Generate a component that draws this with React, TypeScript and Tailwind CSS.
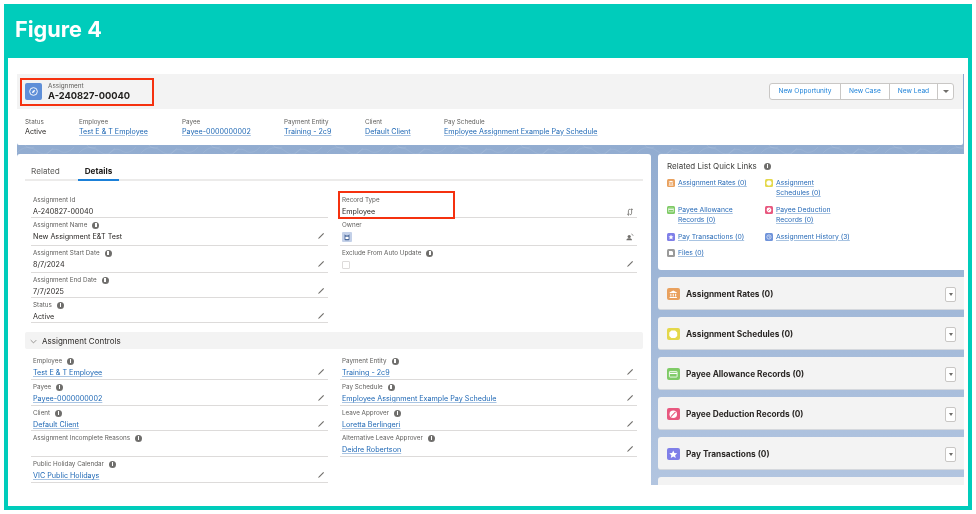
import React from 'react'

const Pencil = () => (
  <svg viewBox="0 0 10 10" className="w-[8px] h-[8px] mb-[2px] shrink-0 text-[#706e6b]" fill="currentColor">
    <path d="M7.8 1.2 8.8 2.2 3.2 7.8 1.2 8.8l1-2z" />
  </svg>
)

const Info = () => (
  <span className="w-[7px] h-[7px] rounded-full bg-[#6f6e6c] inline-flex items-center justify-center shrink-0">
    <span className="w-[1.5px] h-[4px] bg-white" />
  </span>
)

const SwapIcon = () => (
  <svg viewBox="0 0 10 10" className="w-[8px] h-[8px] shrink-0 text-[#706e6b]" fill="none" stroke="currentColor" strokeWidth="1">
    <path d="M3 9V3.5A2 2 0 0 1 5 1.5M1.5 7.5 3 9l1.5-1.5M7 1v5.5A2 2 0 0 1 5 8.5M5.5 2.5 7 1l1.5 1.5" />
  </svg>
)

const OwnerIcon = () => (
  <svg viewBox="0 0 10 10" className="w-[8px] h-[8px] shrink-0 text-[#706e6b]" fill="currentColor">
    <circle cx="4" cy="4.4" r="2" />
    <path d="M.5 9c0-1.6 1.6-2.4 3.5-2.4S7.5 7.4 7.5 9z" />
    <path d="M6.6 1.2A3 3 0 0 1 9 3.6" fill="none" stroke="currentColor" strokeWidth=".8" />
  </svg>
)

const Avatar = () => (
  <span className="w-[10px] h-[10px] rounded-[1px] bg-[#c3d0e8] flex items-center justify-center">
    <svg viewBox="0 0 10 10" className="w-[8px] h-[8px]">
      <path d="M2 1.5 3.5 3h3L8 1.5V8a1 1 0 0 1-1 1H3a1 1 0 0 1-1-1z" fill="#3f5f94" />
      <rect x="3" y="4.6" width="4" height="3" fill="#fff" />
    </svg>
  </span>
)

function Field({ label, info, value, link, edit, height, icon, children }: any) {
  return (
    <div className={`${height} border-b border-[#dddbda] px-[2px] pt-[3px] overflow-hidden`}>
      <div className="flex items-center gap-[5px] h-[8px] text-[6.3px] leading-[8px] text-[#5f5e5c]">
        <span>{label}</span>
        {info && <Info />}
      </div>
      <div className="flex items-center justify-between h-[12px] mt-[2px] pr-[1px] text-[7.2px] leading-[12px] text-[#2b2826]">
        {children}
        {value && (link ? <span className="text-[#1f68b5] underline decoration-[#a9c4e2]">{value}</span> : <span>{value}</span>)}
        {edit && <Pencil />}
        {icon}
      </div>
    </div>
  )
}

const TopField = ({ label, value, link, width }: any) => (
  <div className={width}>
    <div className="text-[6.3px] leading-[8px] text-[#5f5e5c]">{label}</div>
    <div className={`text-[7.15px] leading-[12px] ${link ? 'text-[#1f68b5] underline decoration-[#a9c4e2]' : 'text-[#2b2826]'}`}>{value}</div>
  </div>
)

const RatesGlyph = () => (
  <svg viewBox="0 0 12 12" className="w-full h-full" fill="#fff">
    <path d="M6 2.5 9.5 4.3v.6h-7v-.6zM3.2 5.5h1v2.6h-1zM5.5 5.5h1v2.6h-1zM7.8 5.5h1v2.6h-1zM2.5 8.6h7v1h-7z" />
  </svg>
)
const ScheduleGlyph = () => (
  <svg viewBox="0 0 12 12" className="w-full h-full" fill="#fff">
    <path d="M4.2 2.4h3.6L9.8 4.4v3.2L7.8 9.6H4.2L2.2 7.6V4.4z" />
  </svg>
)
const AllowanceGlyph = () => (
  <svg viewBox="0 0 12 12" className="w-full h-full">
    <rect x="2.3" y="3.3" width="7.4" height="5.4" rx=".6" fill="none" stroke="#fff" strokeWidth=".8" />
    <rect x="2.3" y="4.6" width="7.4" height="1.2" fill="#fff" />
  </svg>
)
const DeductionGlyph = () => (
  <svg viewBox="0 0 12 12" className="w-full h-full">
    <circle cx="6" cy="6" r="3.6" fill="#fff" />
    <path d="M3.8 8.2 8.2 3.8" stroke="#e8587f" strokeWidth="1" />
  </svg>
)
const StarGlyph = () => (
  <svg viewBox="0 0 12 12" className="w-full h-full" fill="#fff">
    <path d="m6 2.3 1.1 2.5 2.7.3-2 1.8.6 2.7L6 8.2 3.6 9.6l.6-2.7-2-1.8 2.7-.3z" />
  </svg>
)
const HistoryGlyph = () => (
  <svg viewBox="0 0 12 12" className="w-full h-full" fill="none" stroke="#fff" strokeWidth=".9">
    <circle cx="6" cy="6" r="3.2" />
    <path d="M6 4.2V6l1.2.8" />
  </svg>
)
const FilesGlyph = () => (
  <svg viewBox="0 0 12 12" className="w-full h-full" fill="#fff">
    <path d="M3 3h4.4L9 4.6V9H3z" />
  </svg>
)

const QuickLink = ({ color, glyph, children }: any) => (
  <div className="flex gap-[3px]">
    <span className={`w-[8px] h-[8px] rounded-[1.5px] mt-[1px] shrink-0 ${color}`}>{glyph}</span>
    <span className="whitespace-nowrap text-[6.8px] leading-[10.4px] text-[#2a6cb8] underline decoration-[#a9c4e2]">{children}</span>
  </div>
)

const RelatedCard = ({ color, glyph, title }: any) => (
  <div className="h-[33px] shrink-0 bg-[#f3f3f3] rounded-l-[3px] border-b border-[#d5d8dd] flex items-center pl-[9px] pr-[8px] pt-[2px]">
    <span className={`w-[12.5px] h-[12.5px] rounded-[2px] shrink-0 ${color}`}>{glyph}</span>
    <span className="ml-[6.5px] flex-1 text-[8.3px] font-bold text-[#2b2826]">{title}</span>
    <span className="w-[11px] h-[15px] bg-white border border-[#c9c7c5] rounded-[2px] flex items-center justify-center">
      <span className="w-0 h-0 border-l-[2.5px] border-r-[2.5px] border-t-[3px] border-l-transparent border-r-transparent border-t-[#706e6b]" />
    </span>
  </div>
)

export default function App() {
  return (
    <div className="w-[976px] h-[514px] bg-white p-[4px] font-['Inter',sans-serif] overflow-hidden blur-[0.35px]">
      <div className="h-[506px] bg-[#00ccbb] flex flex-col px-[4px] pb-[4px]">
        <div className="h-[54px] shrink-0 flex items-center pl-[7px] pb-[3px] text-white text-[21.7px] font-bold">Figure 4</div>

        <div className="flex-1 bg-white pl-[9px] pr-[4px] pt-[16px] min-h-0">
          <div className="relative h-[411px] overflow-hidden bg-gradient-to-b from-[#8ba7cd] to-[#b2c5e0]">
            {/* faint swirl on the banner */}
            <svg className="absolute left-0 top-[71px] w-full h-[9px]" fill="none">
              <defs>
                <pattern id="swirl" width="62" height="9" patternUnits="userSpaceOnUse">
                  <path d="M0 8C6 1 14 1 20 6s12 3 16-3M30 9c3-5 9-6 13-3s10 1 14-4M8 0c2 3 6 4 9 2" stroke="#ffffff" strokeOpacity=".12" strokeWidth=".6" />
                </pattern>
              </defs>
              <rect width="100%" height="9" fill="url(#swirl)" />
            </svg>

            {/* Record header */}
            <div className="relative h-[71px] bg-white mr-[1px] rounded-b-[2px]">
              <div className="h-[35px] bg-[#f3f3f3] flex items-center justify-between pl-[8px] pr-[9px]">
                <div className="flex items-center gap-[6px]">
                  <span className="w-[17px] h-[17px] rounded-[2px] bg-[#5f8fd8] flex items-center justify-center">
                    <svg viewBox="0 0 12 12" className="w-[11px] h-[11px]" fill="none" stroke="#fff" strokeWidth="1">
                      <circle cx="6" cy="6" r="4.2" />
                      <path d="M7.8 4.2 6.8 6.8 4.2 7.8l1-2.6z" fill="#fff" stroke="none" />
                    </svg>
                  </span>
                  <div>
                    <div className="text-[6.4px] leading-[8px] text-[#5f5e5c]">Assignment</div>
                    <div className="text-[9.3px] leading-[11px] font-bold text-[#22201e]">A-240827-00040</div>
                  </div>
                </div>
                <div className="flex w-[185px] h-[17px] bg-white border border-[#c9c7c5] rounded-[3px] text-[6.6px] text-[#1b80d8]">
                  <span className="w-[71px] flex items-center justify-center border-r border-[#c9c7c5]">New Opportunity</span>
                  <span className="w-[49px] flex items-center justify-center border-r border-[#c9c7c5]">New Case</span>
                  <span className="w-[48px] flex items-center justify-center border-r border-[#c9c7c5]">New Lead</span>
                  <span className="flex-1 flex items-center justify-center">
                    <span className="w-0 h-0 border-l-[3px] border-r-[3px] border-t-[3px] border-l-transparent border-r-transparent border-t-[#706e6b]" />
                  </span>
                </div>
              </div>
              <div className="flex pl-[8px] pt-[8.5px]">
                <TopField width="w-[54px]" label="Status" value="Active" />
                <TopField width="w-[103px]" label="Employee" value="Test E & T Employee" link />
                <TopField width="w-[102px]" label="Payee" value="Payee-0000000002" link />
                <TopField width="w-[81px]" label="Payment Entity" value="Training - 2c9" link />
                <TopField width="w-[79px]" label="Client" value="Default Client" link />
                <TopField label="Pay Schedule" value="Employee Assignment Example Pay Schedule" link />
              </div>
            </div>

            <div className="flex gap-[7px] mt-[9px] items-start">
              {/* Details card */}
              <div className="w-[634px] h-[340px] shrink-0 bg-white rounded-[3px] px-[8px]">
                <div className="h-[27px] border-b-2 border-[#ecebea] flex items-end text-[8.2px]">
                  <span className="w-[53px] pl-[6px] h-[14px] text-[#5f5e5c]">Related</span>
                  <span className="w-[41px] h-[16px] -mb-[2px] text-center font-bold text-[#22201e] border-b-2 border-[#1b80d8]">Details</span>
                </div>

                <div className="grid grid-cols-[297px_297px] gap-x-[12px] px-[6px] mt-[14px]">
                  <div>
                    <div className="h-[23px] border-b border-[#dddbda] px-[2px] pt-[1px]">
                      <div className="h-[8px] text-[6.3px] leading-[8px] text-[#5f5e5c]">Assignment Id</div>
                      <div className="h-[12px] mt-[2px] text-[7.2px] leading-[12px] text-[#2b2826]">A-240827-00040</div>
                    </div>
                    <Field height="h-[28px]" label="Assignment Name" info value="New Assignment E&T Test" edit />
                    <Field height="h-[27px]" label="Assignment Start Date" info value="8/7/2024" edit />
                    <Field height="h-[25px]" label="Assignment End Date" info value="7/7/2025" edit />
                    <Field height="h-[25px]" label="Status" info value="Active" edit />
                  </div>
                  <div>
                    <div className="h-[23px] border-b border-[#dddbda] px-[2px] pt-[1px]">
                      <div className="h-[8px] text-[6.3px] leading-[8px] text-[#5f5e5c]">Record Type</div>
                      <div className="flex items-center justify-between h-[12px] mt-[2px] pr-[1px] text-[7.2px] leading-[12px] text-[#2b2826]">
                        <span>Employee</span>
                        <SwapIcon />
                      </div>
                    </div>
                    <Field height="h-[28px]" label="Owner" icon={<OwnerIcon />}>
                      <Avatar />
                    </Field>
                    <Field height="h-[27px]" label="Exclude From Auto Update" info edit>
                      <span className="w-[8px] h-[8px] border border-[#dddbda] rounded-[1px] bg-white" />
                    </Field>
                  </div>
                </div>

                <div className="h-[17px] mt-[9px] pt-[1px] bg-[#f3f3f3] rounded-[2px] flex items-center gap-[5px] pl-[5px] text-[8px] text-[#2b2826]">
                  <svg viewBox="0 0 10 10" className="w-[7px] h-[7px]" fill="none" stroke="#706e6b" strokeWidth="1">
                    <path d="M1 3l4 4 4-4" />
                  </svg>
                  Assignment Controls
                </div>

                <div className="grid grid-cols-[297px_297px] gap-x-[12px] px-[6px] mt-[5px]">
                  <div>
                    <Field height="h-[26px]" label="Employee" info value="Test E & T Employee" link edit />
                    <Field height="h-[26px]" label="Payee" info value="Payee-0000000002" link edit />
                    <Field height="h-[25px]" label="Client" info value="Default Client" link edit />
                    <Field height="h-[26px]" label="Assignment Incomplete Reasons" info />
                    <Field height="h-[26px]" label="Public Holiday Calendar" info value="VIC Public Holidays" link edit />
                  </div>
                  <div>
                    <Field height="h-[26px]" label="Payment Entity" info value="Training - 2c9" link edit />
                    <Field height="h-[26px]" label="Pay Schedule" info value="Employee Assignment Example Pay Schedule" link edit />
                    <Field height="h-[25px]" label="Leave Approver" info value="Loretta Berlingeri" link edit />
                    <Field height="h-[26px]" label="Alternative Leave Approver" info value="Deidre Robertson" link edit />
                  </div>
                </div>
              </div>

              {/* Related lists */}
              <div className="w-[306px] shrink-0 flex flex-col gap-[7px]">
                <div className="h-[116px] shrink-0 bg-white rounded-l-[3px] pl-[9px] pt-[7px]">
                  <div className="flex items-center gap-[7px] h-[10px] text-[8px] text-[#3e3e3c]">
                    Related List Quick Links
                    <Info />
                  </div>
                  <div className="grid grid-cols-[98px_98px] grid-rows-[27px_27px_16px_16px] mt-[6.5px]">
                    <QuickLink color="bg-[#e9a15e]" glyph={<RatesGlyph />}>Assignment Rates (0)</QuickLink>
                    <QuickLink color="bg-[#e4d84b]" glyph={<ScheduleGlyph />}>Assignment<br />Schedules (0)</QuickLink>
                    <QuickLink color="bg-[#7fcb66]" glyph={<AllowanceGlyph />}>Payee Allowance<br />Records (0)</QuickLink>
                    <QuickLink color="bg-[#e8587f]" glyph={<DeductionGlyph />}>Payee Deduction<br />Records (0)</QuickLink>
                    <QuickLink color="bg-[#7f7fe8]" glyph={<StarGlyph />}>Pay Transactions (0)</QuickLink>
                    <QuickLink color="bg-[#6f93da]" glyph={<HistoryGlyph />}>Assignment History (3)</QuickLink>
                    <QuickLink color="bg-[#9a9a9a]" glyph={<FilesGlyph />}>Files (0)</QuickLink>
                  </div>
                </div>
                <RelatedCard color="bg-[#e9a15e]" glyph={<RatesGlyph />} title="Assignment Rates (0)" />
                <RelatedCard color="bg-[#e4d84b]" glyph={<ScheduleGlyph />} title="Assignment Schedules (0)" />
                <RelatedCard color="bg-[#7fcb66]" glyph={<AllowanceGlyph />} title="Payee Allowance Records (0)" />
                <RelatedCard color="bg-[#e8587f]" glyph={<DeductionGlyph />} title="Payee Deduction Records (0)" />
                <RelatedCard color="bg-[#7f7fe8]" glyph={<StarGlyph />} title="Pay Transactions (0)" />
                <div className="h-[33px] shrink-0 bg-[#f3f3f3] rounded-l-[3px]" />
              </div>
            </div>

            {/* red callouts drawn over the screenshot */}
            <div className="absolute left-[3px] top-[4px] w-[134px] h-[28px] border-2 border-[#f5310f]" />
            <div className="absolute left-[321px] top-[117px] w-[117px] h-[28px] border-2 border-[#f5310f]" />
          </div>
        </div>
      </div>
    </div>
  )
}
